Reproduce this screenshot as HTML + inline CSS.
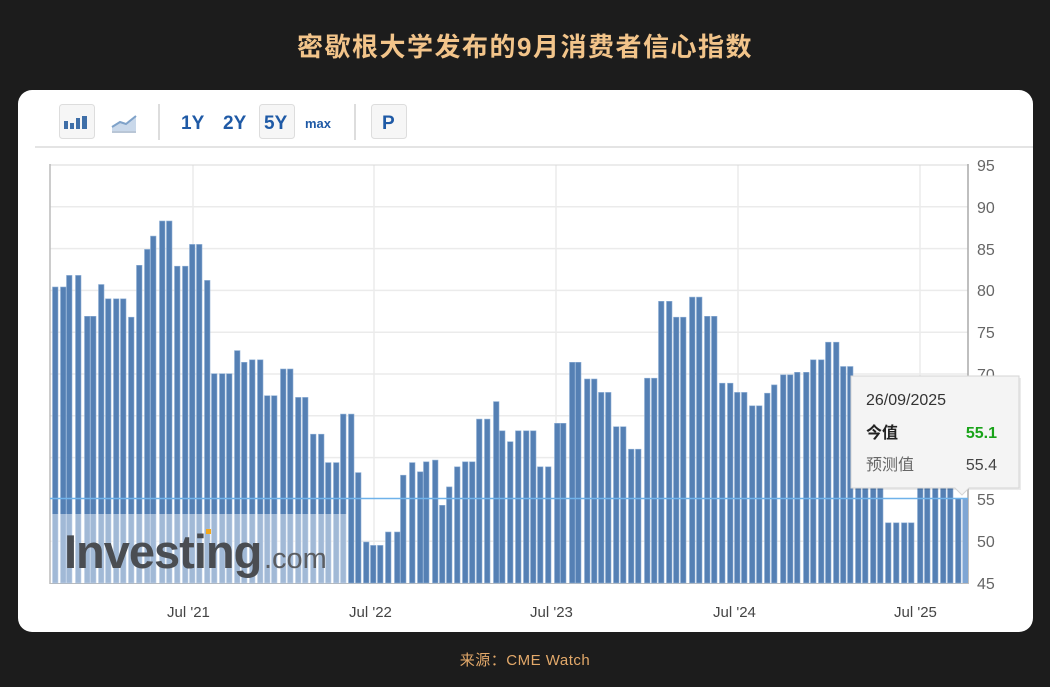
<!DOCTYPE html>
<html><head><meta charset="utf-8"><style>
html,body{margin:0;padding:0;}
body{width:1050px;height:687px;background:#1c1c1c;position:relative;overflow:hidden;font-family:"Liberation Sans","Noto Sans CJK SC",sans-serif;}
.title{position:absolute;left:0;width:1050px;top:27px;text-align:center;color:#f2c48a;font-size:26px;font-weight:bold;letter-spacing:1.5px;font-family:"Liberation Sans","Noto Sans CJK SC",sans-serif;}
.card{position:absolute;left:18px;top:90px;width:1015px;height:542px;background:#fff;border-radius:14px;}
.foot{position:absolute;left:0;width:1050px;top:649px;text-align:center;color:#e3a96a;font-size:15px;letter-spacing:0.5px;}
svg{position:absolute;left:0;top:0;}
</style></head><body>
<div class="title">密歇根大学发布的9月消费者信心指数</div>
<div class="card"></div>
<div class="foot">来源：CME Watch</div>
<svg width="1050" height="687" viewBox="0 0 1050 687" font-family="Liberation Sans, Noto Sans CJK SC, sans-serif">
<rect x="59.5" y="104.5" width="35" height="34" rx="3" fill="#f6f6f6" stroke="#ddd"/>
<g fill="#3f6fa8"><rect x="64" y="121" width="4" height="8"/><rect x="70" y="123" width="4" height="6"/><rect x="76" y="118" width="4" height="11"/><rect x="82" y="116" width="5" height="13"/></g>
<path d="M112 127 L120 122 L126 124 L136 116 L136 131 L112 131Z" fill="#c9d8ea"/>
<path d="M112 127 L120 122 L126 124 L136 116" stroke="#7fa2c9" stroke-width="2" fill="none"/>
<rect x="112" y="131" width="24" height="2" fill="#b9c6d6"/>
<rect x="158" y="104" width="2" height="36" fill="#ddd"/>
<g fill="#1f5aa6" font-weight="bold" font-size="19">
<text x="181" y="129">1Y</text><text x="223" y="129">2Y</text>
<rect x="259.5" y="104.5" width="35" height="34" rx="3" fill="#f6f6f6" stroke="#ddd"/>
<text x="264" y="129">5Y</text>
<text x="305" y="128" font-size="13">max</text>
<rect x="354" y="104" width="2" height="36" fill="#ddd"/>
<rect x="371.5" y="104.5" width="35" height="34" rx="3" fill="#f6f6f6" stroke="#ddd"/>
<text x="382" y="129">P</text>
</g>
<rect x="35" y="146" width="998" height="2" fill="#e4e4e4"/>
<g stroke="#ebebeb" stroke-width="1.5">
<line x1="50" y1="206.8" x2="968" y2="206.8"/><line x1="50" y1="248.6" x2="968" y2="248.6"/><line x1="50" y1="290.4" x2="968" y2="290.4"/><line x1="50" y1="332.2" x2="968" y2="332.2"/><line x1="50" y1="374" x2="968" y2="374"/><line x1="50" y1="415.8" x2="968" y2="415.8"/><line x1="50" y1="457.6" x2="968" y2="457.6"/><line x1="50" y1="541.2" x2="968" y2="541.2"/>
<line x1="193" y1="165" x2="193" y2="583"/><line x1="374" y1="165" x2="374" y2="583"/><line x1="556" y1="165" x2="556" y2="583"/><line x1="738" y1="165" x2="738" y2="583"/><line x1="920" y1="165" x2="920" y2="583"/>
</g>
<line x1="50" y1="165" x2="968" y2="165" stroke="#d8d8d8"/>
<line x1="50" y1="164" x2="50" y2="584" stroke="#bbb" stroke-width="1.5"/>
<line x1="968" y1="164" x2="968" y2="584" stroke="#aaa" stroke-width="1.5"/>
<line x1="50" y1="583.5" x2="968" y2="583.5" stroke="#bbb"/>
<g fill="#5580b4" stroke="#8fb0d6" stroke-width="0.6">
<rect x="52.5" y="287" width="5.5" height="296"/><rect x="60.5" y="287" width="5.5" height="296"/><rect x="66.5" y="275.4" width="5.5" height="307.6"/><rect x="75.5" y="275.4" width="5.5" height="307.6"/><rect x="84.5" y="316.3" width="5.5" height="266.7"/><rect x="90.5" y="316.3" width="5.5" height="266.7"/><rect x="98.5" y="284.5" width="5.5" height="298.5"/><rect x="105.5" y="298.8" width="5.5" height="284.2"/><rect x="113.5" y="298.8" width="5.5" height="284.2"/><rect x="120.5" y="298.8" width="5.5" height="284.2"/><rect x="128.5" y="317.2" width="5.5" height="265.8"/><rect x="136.5" y="265.3" width="5.5" height="317.7"/><rect x="144.5" y="249.4" width="5.5" height="333.6"/><rect x="150.5" y="236.1" width="5.5" height="346.9"/><rect x="159.5" y="221" width="5.5" height="362"/><rect x="166.5" y="221" width="5.5" height="362"/><rect x="174.5" y="266.2" width="5.5" height="316.8"/><rect x="182.5" y="266.2" width="5.5" height="316.8"/><rect x="189.5" y="244.4" width="5.5" height="338.6"/><rect x="196.5" y="244.4" width="5.5" height="338.6"/><rect x="204.5" y="280.4" width="5.5" height="302.6"/><rect x="211.5" y="373.7" width="5.5" height="209.3"/><rect x="219.5" y="373.7" width="5.5" height="209.3"/><rect x="226.5" y="373.7" width="5.5" height="209.3"/><rect x="234.5" y="350.6" width="5.5" height="232.4"/><rect x="241.5" y="362.3" width="5.5" height="220.7"/><rect x="249.5" y="359.8" width="5.5" height="223.2"/><rect x="257.5" y="359.8" width="5.5" height="223.2"/><rect x="264.5" y="395.7" width="5.5" height="187.3"/><rect x="271.5" y="395.7" width="5.5" height="187.3"/><rect x="280.5" y="369" width="5.5" height="214"/><rect x="287.5" y="369" width="5.5" height="214"/><rect x="295.5" y="397.4" width="5.5" height="185.6"/><rect x="302.5" y="397.4" width="5.5" height="185.6"/><rect x="310.5" y="434.2" width="5.5" height="148.8"/><rect x="318.5" y="434.2" width="5.5" height="148.8"/><rect x="325.5" y="462.6" width="5.5" height="120.4"/><rect x="333.5" y="462.6" width="5.5" height="120.4"/><rect x="340.5" y="414.1" width="5.5" height="168.9"/><rect x="348.5" y="414.1" width="5.5" height="168.9"/><rect x="355.5" y="472.6" width="5.5" height="110.4"/><rect x="363.5" y="542" width="5.5" height="41"/><rect x="370.5" y="545.4" width="5.5" height="37.6"/><rect x="377.5" y="545.4" width="5.5" height="37.6"/><rect x="385.5" y="532" width="5.5" height="51"/><rect x="394.5" y="532" width="5.5" height="51"/><rect x="400.5" y="475.2" width="5.5" height="107.8"/><rect x="409.5" y="462.6" width="5.5" height="120.4"/><rect x="417.5" y="471.8" width="5.5" height="111.2"/><rect x="423.5" y="461.8" width="5.5" height="121.2"/><rect x="432.5" y="460.1" width="5.5" height="122.9"/><rect x="439.5" y="505.3" width="5.5" height="77.7"/><rect x="446.5" y="486.9" width="5.5" height="96.1"/><rect x="454.5" y="466.8" width="5.5" height="116.2"/><rect x="462.5" y="461.8" width="5.5" height="121.2"/><rect x="469.5" y="461.8" width="5.5" height="121.2"/><rect x="476.5" y="419.1" width="5.5" height="163.9"/><rect x="484.5" y="419.1" width="5.5" height="163.9"/><rect x="493.5" y="401.6" width="5.5" height="181.4"/><rect x="499.5" y="430.8" width="5.5" height="152.2"/><rect x="507.5" y="441.7" width="5.5" height="141.3"/><rect x="515.5" y="430.8" width="5.5" height="152.2"/><rect x="523.5" y="430.8" width="5.5" height="152.2"/><rect x="530.5" y="430.8" width="5.5" height="152.2"/><rect x="537.5" y="466.8" width="5.5" height="116.2"/><rect x="545.5" y="466.8" width="5.5" height="116.2"/><rect x="554.5" y="423.3" width="5.5" height="159.7"/><rect x="560.5" y="423.3" width="5.5" height="159.7"/><rect x="569.5" y="362.3" width="5.5" height="220.7"/><rect x="575.5" y="362.3" width="5.5" height="220.7"/><rect x="584.5" y="379" width="5.5" height="204"/><rect x="591.5" y="379" width="5.5" height="204"/><rect x="598.5" y="392.4" width="5.5" height="190.6"/><rect x="605.5" y="392.4" width="5.5" height="190.6"/><rect x="613.5" y="426.7" width="5.5" height="156.3"/><rect x="620.5" y="426.7" width="5.5" height="156.3"/><rect x="628.5" y="449.2" width="5.5" height="133.8"/><rect x="635.5" y="449.2" width="5.5" height="133.8"/><rect x="644.5" y="378.2" width="5.5" height="204.8"/><rect x="651.5" y="378.2" width="5.5" height="204.8"/><rect x="658.5" y="301.3" width="5.5" height="281.7"/><rect x="666.5" y="301.3" width="5.5" height="281.7"/><rect x="673.5" y="317.2" width="5.5" height="265.8"/><rect x="680.5" y="317.2" width="5.5" height="265.8"/><rect x="689.5" y="297.1" width="5.5" height="285.9"/><rect x="696.5" y="297.1" width="5.5" height="285.9"/><rect x="704.5" y="316.3" width="5.5" height="266.7"/><rect x="711.5" y="316.3" width="5.5" height="266.7"/><rect x="719.5" y="383.2" width="5.5" height="199.8"/><rect x="727.5" y="383.2" width="5.5" height="199.8"/><rect x="734.5" y="392.4" width="5.5" height="190.6"/><rect x="741.5" y="392.4" width="5.5" height="190.6"/><rect x="749.5" y="405.8" width="5.5" height="177.2"/><rect x="756.5" y="405.8" width="5.5" height="177.2"/><rect x="764.5" y="393.2" width="5.5" height="189.8"/><rect x="771.5" y="384.9" width="5.5" height="198.1"/><rect x="780.5" y="374.8" width="5.5" height="208.2"/><rect x="787.5" y="374.8" width="5.5" height="208.2"/><rect x="794.5" y="372.3" width="5.5" height="210.7"/><rect x="803.5" y="372.3" width="5.5" height="210.7"/><rect x="810.5" y="359.8" width="5.5" height="223.2"/><rect x="818.5" y="359.8" width="5.5" height="223.2"/><rect x="825.5" y="342.2" width="5.5" height="240.8"/><rect x="833.5" y="342.2" width="5.5" height="240.8"/><rect x="840.5" y="366.5" width="5.5" height="216.5"/><rect x="847.5" y="366.5" width="5.5" height="216.5"/><rect x="855.5" y="418.3" width="5.5" height="164.7"/><rect x="862.5" y="418.3" width="5.5" height="164.7"/><rect x="870.5" y="482.7" width="5.5" height="100.3"/><rect x="877.5" y="482.7" width="5.5" height="100.3"/><rect x="885.5" y="522.8" width="5.5" height="60.2"/><rect x="893.5" y="522.8" width="5.5" height="60.2"/><rect x="901.5" y="522.8" width="5.5" height="60.2"/><rect x="908.5" y="522.8" width="5.5" height="60.2"/><rect x="917.5" y="451.7" width="5.5" height="131.3"/><rect x="924.5" y="451.7" width="5.5" height="131.3"/><rect x="932.5" y="443.4" width="5.5" height="139.6"/><rect x="940.5" y="443.4" width="5.5" height="139.6"/><rect x="947.5" y="472.6" width="5.5" height="110.4"/><rect x="955.5" y="498.6" width="5.5" height="84.4"/>
</g>
<rect x="962.5" y="498.6" width="5.5" height="84.4" fill="#7fa6d4"/>
<line x1="50" y1="498.5" x2="968" y2="498.5" stroke="#6fb2ea" stroke-width="1.5"/>
<rect x="51" y="514" width="296" height="69" fill="#fff" opacity="0.45"/>
<text x="64" y="568" font-size="47" font-weight="bold" fill="#4a4d52" letter-spacing="-1">Investing</text>
<rect x="206" y="529" width="5" height="5" fill="#f2a81d"/>
<text x="264" y="568" font-size="29" fill="#5a5d62">.com</text>
<g fill="#666" font-size="16">
<text x="977" y="171">95</text><text x="977" y="213">90</text><text x="977" y="255">85</text><text x="977" y="296">80</text><text x="977" y="338">75</text><text x="977" y="380">70</text><text x="977" y="422">65</text><text x="977" y="464">60</text><text x="977" y="505">55</text><text x="977" y="547">50</text><text x="977" y="589">45</text>
</g>
<g fill="#444" font-size="15">
<text x="167" y="617">Jul '21</text><text x="349" y="617">Jul '22</text><text x="530" y="617">Jul '23</text><text x="713" y="617">Jul '24</text><text x="894" y="617">Jul '25</text>
</g>
<g>
<rect x="853" y="378" width="168" height="112" fill="#000" opacity="0.08"/>
<path d="M851 376 H1019 V488 H969 L962 495 L955 488 H851Z" fill="#f4f4f4" stroke="#d5d5d5"/>
<text x="866" y="405" font-size="16" fill="#333">26/09/2025</text>
<text x="866" y="438" font-size="16" font-weight="bold" fill="#222">今值</text>
<text x="997" y="438" font-size="16" font-weight="bold" fill="#19a319" text-anchor="end">55.1</text>
<text x="866" y="470" font-size="16" fill="#666">预测值</text>
<text x="997" y="470" font-size="16" fill="#444" text-anchor="end">55.4</text>
</g>
</svg>
</body></html>
